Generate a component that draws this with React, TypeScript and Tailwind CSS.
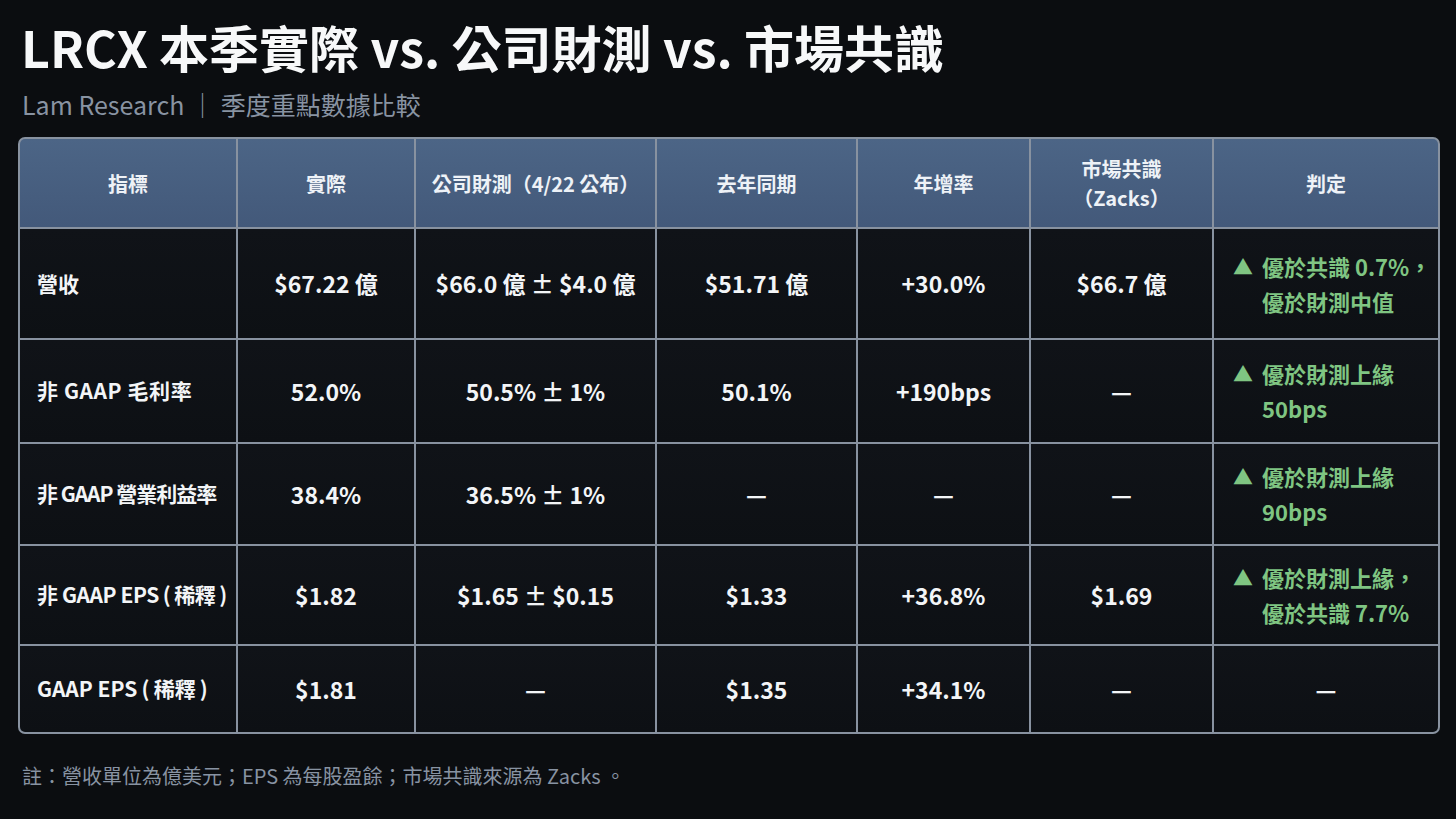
import React from 'react'

const font = { fontFamily: '"Noto Sans CJK TC", "Noto Sans", sans-serif' }

type Row = {
  label: string
  labelCls: string
  actual: string
  guide: string
  lastYear: string
  yoy: string
  consensus: string
  verdict: string[] | null
  h: string
}

const rows: Row[] = [
  { label: '營收', labelCls: '', actual: '$67.22 億', guide: '$66.0 億 ± $4.0 億', lastYear: '$51.71 億', yoy: '+30.0%', consensus: '$66.7 億', verdict: ['優於共識 0.7%，', '優於財測中值'], h: 'h-[109px]' },
  { label: '非 GAAP 毛利率', labelCls: 'tracking-[0.6px]', actual: '52.0%', guide: '50.5% ± 1%', lastYear: '50.1%', yoy: '+190bps', consensus: '—', verdict: ['優於財測上緣', '50bps'], h: 'h-[102px]' },
  { label: '非 GAAP 營業利益率', labelCls: 'tracking-[-1px]', actual: '38.4%', guide: '36.5% ± 1%', lastYear: '—', yoy: '—', consensus: '—', verdict: ['優於財測上緣', '90bps'], h: 'h-[100px]' },
  { label: '非 GAAP EPS\u2009(\u2009稀釋\u2009)', labelCls: 'tracking-[-0.4px]', actual: '$1.82', guide: '$1.65 ± $0.15', lastYear: '$1.33', yoy: '+36.8%', consensus: '$1.69', verdict: ['優於財測上緣，', '優於共識 7.7%'], h: 'h-[98px]' },
  { label: 'GAAP EPS\u2009(\u2009稀釋\u2009)', labelCls: '', actual: '$1.81', guide: '—', lastYear: '$1.35', yoy: '+34.1%', consensus: '—', verdict: null, h: 'h-[86px]' },
]

function HeadCell({ children }: { children: React.ReactNode }) {
  return (
    <div className="h-[88px] flex items-center justify-center text-center bg-gradient-to-b from-[#4c6586] to-[#43597a] text-[20px] font-bold leading-[29px] text-[#eef2f7]">
      {children}
    </div>
  )
}

function Cell({ children, h, cls = 'justify-center text-[23px]' }: { children: React.ReactNode; h: string; cls?: string }) {
  return (
    <div className={`${h} flex items-center whitespace-nowrap bg-gradient-to-b from-[#101318] to-[#0d1014] font-bold text-[#f3f5f7] ${cls}`}>
      {children}
    </div>
  )
}

export default function App() {
  return (
    <div style={font} className="w-[1456px] h-[819px] bg-[#0b0d10] overflow-hidden">
      <div className="px-[18px] pt-[17px]">
        <h1 className="pl-[3px] text-[50px] font-bold leading-[58px] text-[#f7f8f9]">
          LRCX 本季實際 vs. 公司財測 vs. 市場共識
        </h1>
        <p className="pl-[4px] mt-[14px] text-[25px] leading-[30px] text-[#8893a2]">
          Lam Research ｜ 季度重點數據比較
        </p>

        <div className="mt-[18px] w-[1422px] rounded-[7px] overflow-hidden bg-[#8892a0] p-[2px]">
          <div className="grid grid-cols-[216px_176px_239px_199px_171px_181px_224px] gap-[2px] rounded-[5px] overflow-hidden">
            <HeadCell>指標</HeadCell>
            <HeadCell>實際</HeadCell>
            <HeadCell>公司財測（4/22 公布）</HeadCell>
            <HeadCell>去年同期</HeadCell>
            <HeadCell>年增率</HeadCell>
            <HeadCell>
              <div>
                市場共識
                <br />
                （Zacks）
              </div>
            </HeadCell>
            <HeadCell>判定</HeadCell>

            {rows.map((r) => (
              <React.Fragment key={r.label}>
                <Cell h={r.h} cls={`justify-start pl-[17px] text-[21px] ${r.labelCls}`}>{r.label}</Cell>
                <Cell h={r.h}>{r.actual}</Cell>
                <Cell h={r.h}>{r.guide}</Cell>
                <Cell h={r.h}>{r.lastYear}</Cell>
                <Cell h={r.h}>{r.yoy}</Cell>
                <Cell h={r.h}>{r.consensus}</Cell>
                {r.verdict ? (
                  <div className={`${r.h} flex items-center pl-[19px] bg-gradient-to-b from-[#101318] to-[#0d1014] text-[22px] font-bold leading-[35px] text-[#7fc582]`}>
                    <div className="flex items-start">
                      <span className="w-[29px] text-[20px]">▲</span>
                      <div>
                        {r.verdict.map((l) => (
                          <div key={l}>{l}</div>
                        ))}
                      </div>
                    </div>
                  </div>
                ) : (
                  <Cell h={r.h}>—</Cell>
                )}
              </React.Fragment>
            ))}
          </div>
        </div>

        <p className="pl-[4px] mt-[29px] text-[20px] leading-[26px] text-[#8893a2]">
          註：營收單位為億美元；EPS 為每股盈餘；市場共識來源為 Zacks 。
        </p>
      </div>
    </div>
  )
}
